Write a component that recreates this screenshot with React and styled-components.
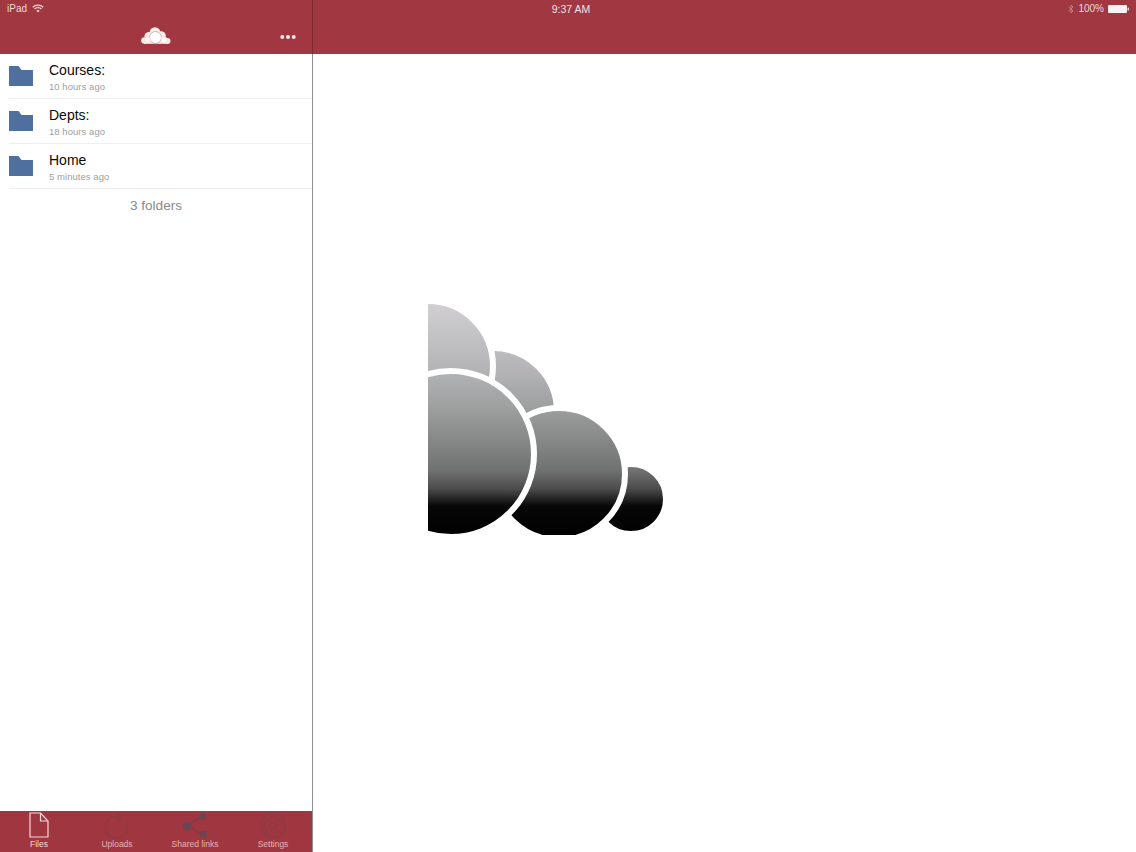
import React from "react";
import styled, { createGlobalStyle } from "styled-components";

const Global = createGlobalStyle`
  html, body { margin: 0; padding: 0; background: #fff; }
  #root { width: 1136px; height: 852px; overflow: hidden; }
  * { box-sizing: border-box; }
`;

const Screen = styled.div`
  position: relative;
  display: grid;
  grid-template-columns: 312px 1px 1fr;
  width: 1136px;
  height: 852px;
  font-family: "Liberation Sans", Arial, sans-serif;
  background: #fff;
`;

const StatusBar = styled.div`
  position: absolute;
  top: 0;
  left: 0;
  right: 0;
  height: 17px;
  display: grid;
  grid-template-columns: 1fr auto 1fr;
  align-items: center;
  padding: 0 7px;
  color: #f1d9da;
  font-size: 10px;
`;

const StatusLeft = styled.div`
  display: flex;
  align-items: center;
  gap: 5px;
`;

const StatusRight = styled.div`
  display: flex;
  align-items: center;
  justify-content: flex-end;
  gap: 4px;
`;

const Clock = styled.div`
  font-size: 10.5px;
  padding-left: 6px;
  color: #f5e3e4;
`;

const Sidebar = styled.aside`
  display: flex;
  flex-direction: column;
  height: 852px;
`;

const NavBar = styled.header`
  flex: none;
  height: 54px;
  padding: 18px 16px 0;
  background: #a03741;
  display: grid;
  grid-template-columns: 1fr auto 1fr;
  align-items: center;
`;

const NavRight = styled.div`
  display: flex;
  justify-content: flex-end;
  padding-top: 1px;
`;

const Divider = styled.div`
  background: linear-gradient(to bottom, #7f2b34 0, #7f2b34 54px, #8e8e8e 54px, #8e8e8e 100%);
`;

const FileList = styled.ul`
  flex: 1;
  margin: 0;
  padding: 0;
  list-style: none;
`;

const Row = styled.li`
  height: 45px;
  display: flex;
  align-items: center;
  gap: 16px;
  margin-left: 9px;
  padding-bottom: 1px;
  border-bottom: 1px solid #eeeeee;
`;

const RowText = styled.div`
  display: flex;
  flex-direction: column;
  gap: 3px;
  padding-top: 3px;
`;

const Name = styled.div`
  font-size: 14px;
  line-height: 16px;
  color: #0a0a0a;
`;

const Meta = styled.div`
  font-size: 9.5px;
  line-height: 11px;
  letter-spacing: 0.05px;
  color: #a0a0a0;
`;

const Count = styled.div`
  text-align: center;
  font-size: 13.6px;
  line-height: 16px;
  padding-top: 9px;
  color: #8a8a8a;
`;

const TabBar = styled.nav`
  flex: none;
  height: 41px;
  background: #a03640;
  display: grid;
  grid-template-columns: repeat(4, 78px);
`;

const Tab = styled.div`
  display: flex;
  flex-direction: column;
  align-items: center;
  height: 41px;
`;

const TabIcon = styled.div`
  height: 28px;
  display: flex;
  align-items: flex-start;
  padding-top: 1px;
`;

const TabLabel = styled.div`
  font-size: 8.5px;
  line-height: 11px;
  color: ${(p) => (p.$active ? "#f6dcdc" : "#e3b4b6")};
`;

const Detail = styled.main`
  display: flex;
  flex-direction: column;
  height: 852px;
`;

const DetailBody = styled.div`
  flex: 1;
  padding: 250px 0 0 115px;
`;

const Folder = () => (
  <svg width="24" height="21" viewBox="0 0 24 21">
    <path d="M0 1h9.5l3 4H24v16H0z" fill="#4f6f9f" />
  </svg>
);

const Wifi = () => (
  <svg width="12" height="9" viewBox="0 0 12 9" fill="none" stroke="#f1d9da" strokeWidth="1.2">
    <path d="M.7 3.2a7.6 7.6 0 0 1 10.6 0" />
    <path d="M2.5 5a5 5 0 0 1 7 0" />
    <path d="M6 8.6 4.4 6.8a2.4 2.4 0 0 1 3.2 0z" fill="#f1d9da" stroke="none" />
  </svg>
);

const Bluetooth = () => (
  <svg width="6" height="10" viewBox="0 0 6 10" fill="none" stroke="#c98c90" strokeWidth=".8">
    <path d="M.5 2.8 5 7 3 9V1l2 2L.5 7.2" />
  </svg>
);

const Battery = () => (
  <svg width="21" height="8" viewBox="0 0 21 8">
    <rect x="0" y="0" width="19" height="8" rx="1" fill="#fbf3f3" />
    <rect x="19.5" y="2.5" width="1.5" height="3" rx=".6" fill="#e8c8c9" />
  </svg>
);

const SmallCloud = () => (
  <svg width="30" height="18" viewBox="0 0 30 18">
    <g fill="#fdeee9">
      <circle cx="14" cy="5.6" r="5.4" />
      <circle cx="8" cy="9.5" r="4.6" />
      <circle cx="20" cy="9" r="4.8" />
      <circle cx="3.4" cy="13.5" r="3.2" />
      <circle cx="26.6" cy="14" r="2.9" />
      <rect x="3" y="12" width="24" height="4.8" />
    </g>
    <circle cx="14.5" cy="10.5" r="6" fill="#fff" stroke="#bfa0a4" strokeWidth=".8" />
    <circle cx="23" cy="13" r="3.2" fill="#fff" stroke="#e2c4c4" strokeWidth=".5" />
    <circle cx="6.5" cy="13" r="3.2" fill="#fff3ee" stroke="#e8cccc" strokeWidth=".4" />
  </svg>
);

const More = () => (
  <svg width="16" height="6" viewBox="0 0 16 6" fill="#fbeeee">
    <circle cx="2.3" cy="3" r="2" />
    <circle cx="8" cy="3" r="2" />
    <circle cx="13.7" cy="3" r="2" />
  </svg>
);

const FileIcon = () => (
  <svg width="20" height="26" viewBox="0 0 20 26" fill="none" stroke="#f7d7d6" strokeWidth="1.2">
    <path d="M1 1h10.5L19 9v16H1z" />
    <path d="M11.5 1v8H19" />
  </svg>
);

const UploadIcon = () => (
  <svg width="26" height="27" viewBox="0 0 26 27" fill="none" stroke="#8e3a42" strokeWidth="1.4">
    <path d="M16 5.2a11 11 0 1 0 6 5" />
    <path d="M13 1.5 17 5.2 13 9" />
  </svg>
);

const ShareIcon = () => (
  <svg width="28" height="27" viewBox="0 0 28 27">
    <path d="M21.5 4.5 6 14l16.5 9" fill="none" stroke="#7f3b48" strokeWidth="1.4" />
    <circle cx="21.5" cy="4.5" r="3.6" fill="#6d4452" />
    <circle cx="6" cy="14" r="4.4" fill="#6d4452" />
    <circle cx="22.5" cy="22.5" r="3.6" fill="#6d4452" />
  </svg>
);

const GearIcon = () => (
  <svg width="28" height="27" viewBox="0 0 28 27" fill="none" stroke="#8e3b44">
    <circle cx="14" cy="13.5" r="12" strokeWidth="2.4" strokeDasharray="2.5 1" />
    <circle cx="14" cy="13.5" r="8.5" strokeWidth="1" />
    <circle cx="14" cy="13.5" r="3.2" strokeWidth="1.4" />
  </svg>
);

const BigCloud = () => (
  <svg width="240" height="231" viewBox="428 304 240 231">
    <defs>
      <linearGradient id="cloudFade" gradientUnits="userSpaceOnUse" x1="0" y1="304" x2="0" y2="535">
        <stop offset="0" stopColor="#d1cfd2" />
        <stop offset="0.3" stopColor="#b2b2b4" />
        <stop offset="0.46" stopColor="#9c9e9e" />
        <stop offset="0.72" stopColor="#707171" />
        <stop offset="0.8" stopColor="#4c4c4c" />
        <stop offset="0.875" stopColor="#070707" />
        <stop offset="1" stopColor="#000" />
      </linearGradient>
    </defs>
    <g fill="url(#cloudFade)" stroke="#fff" strokeWidth="6">
      <circle cx="493" cy="412" r="64" />
      <circle cx="428" cy="366" r="65" />
      <circle cx="631" cy="499" r="35" />
      <circle cx="559" cy="474" r="66" />
      <circle cx="451" cy="454" r="83" />
    </g>
  </svg>
);

const rows = [
  { name: "Courses:", meta: "10 hours ago" },
  { name: "Depts:", meta: "18 hours ago" },
  { name: "Home", meta: "5 minutes ago" },
];

const tabs = [
  { label: "Files", icon: <FileIcon />, active: true },
  { label: "Uploads", icon: <UploadIcon /> },
  { label: "Shared links", icon: <ShareIcon /> },
  { label: "Settings", icon: <GearIcon /> },
];

export default function App() {
  return (
    <Screen>
      <Global />
      <Sidebar>
        <NavBar>
          <span />
          <SmallCloud />
          <NavRight>
            <More />
          </NavRight>
        </NavBar>
        <FileList>
          {rows.map((r) => (
            <Row key={r.name}>
              <Folder />
              <RowText>
                <Name>{r.name}</Name>
                <Meta>{r.meta}</Meta>
              </RowText>
            </Row>
          ))}
          <Count>3 folders</Count>
        </FileList>
        <TabBar>
          {tabs.map((t) => (
            <Tab key={t.label}>
              <TabIcon>{t.icon}</TabIcon>
              <TabLabel $active={t.active}>{t.label}</TabLabel>
            </Tab>
          ))}
        </TabBar>
      </Sidebar>
      <Divider />
      <Detail>
        <NavBar />
        <DetailBody>
          <BigCloud />
        </DetailBody>
      </Detail>
      <StatusBar>
        <StatusLeft>
          iPad
          <Wifi />
        </StatusLeft>
        <Clock>9:37 AM</Clock>
        <StatusRight>
          <Bluetooth />
          100%
          <Battery />
        </StatusRight>
      </StatusBar>
    </Screen>
  );
}
